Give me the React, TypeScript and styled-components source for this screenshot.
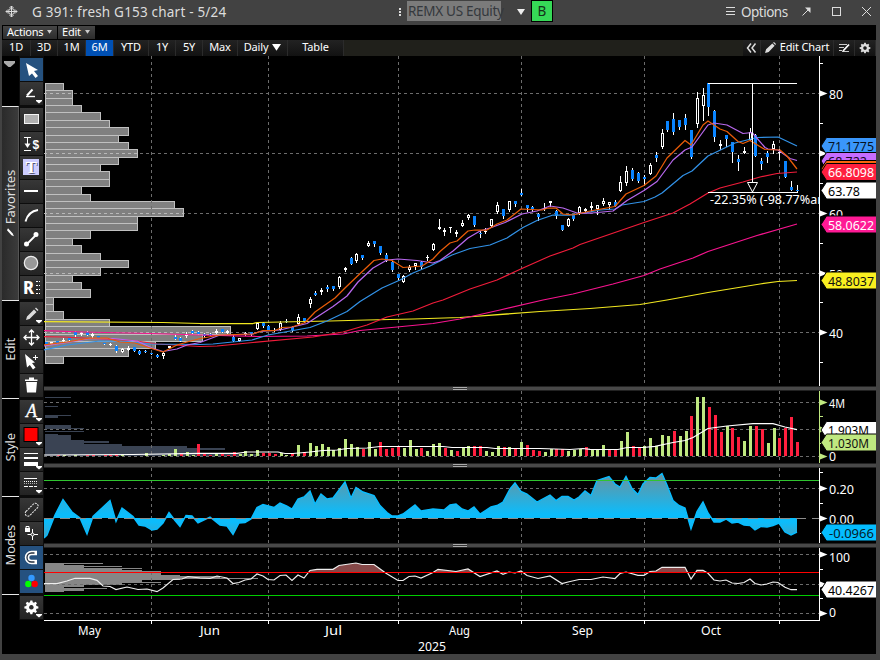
import React from 'react';
import styled, { createGlobalStyle, css } from 'styled-components';

const FONT = '"Noto Sans", "Open Sans", sans-serif';

const Global = createGlobalStyle`
  * { box-sizing: border-box; }
  body { margin: 0; background: #424242; overflow: hidden; font-family: ${FONT}; }
  svg { display: block; }
`;

const Window = styled.div`
  width: 880px;
  height: 660px;
  display: flex;
  flex-direction: column;
  background: #424242;
  color: #fff;
`;

const TitleBar = styled.header`
  height: 25px;
  flex: none;
  display: flex;
  align-items: center;
  padding: 0 5px 2px;
  color: #dcdcdc;
  font-size: 13.5px;
  line-height: 22px;
  white-space: nowrap;
`;

const Title = styled.div`
  width: 380px;
  padding-left: 14px;
  letter-spacing: 0.2px;
`;

const Security = styled.div`
  width: 94px;
  height: 20px;
  margin: -1px 16px 0 5px;
  background: #7b7b7b;
  color: #34383d;
  line-height: 21px;
  padding-left: 1px;
  letter-spacing: -0.3px;
`;

const Badge = styled.div`
  width: 22px;
  height: 22px;
  margin: -1px 172px 0 6px;
  border: 1px solid #000;
  background: #36d957;
  color: #14331a;
  text-align: center;
  line-height: 21px;
`;

const Options = styled.div`
  width: 63px;
  padding-left: 4px;
  letter-spacing: -0.5px;
`;

const WindowIcons = styled.div`
  display: flex;
  flex: 1;
`;

const Screen = styled.main`
  flex: 1;
  margin: 0 4px 6px 2px;
  background: #000;
  display: flex;
  flex-direction: column;
  min-height: 0;
`;

const MenuRow = styled.nav`
  height: 15px;
  flex: none;
  display: flex;
  gap: 1px;
  padding: 1px 1px 0;
`;

const MenuButton = styled.div<{ $w: number }>`
  width: ${p => p.$w}px;
  height: 13px;
  background: linear-gradient(#464646, #2c2c2c);
  font-size: 11px;
  line-height: 12px;
  letter-spacing: -0.2px;
  padding: 0 5px 1px 4px;
  display: flex;
  align-items: center;
  justify-content: space-between;
  white-space: nowrap;
`;

const RangeBar = styled.nav`
  height: 16px;
  flex: none;
  display: flex;
  background: #20201b;
`;

const RangeButton = styled.div<{ $w: number; $active?: boolean }>`
  width: ${p => p.$w}px;
  height: 16px;
  padding-bottom: 1px;
  border-right: 1px solid #2b2b2b;
  background: ${p => (p.$active ? '#0050b4' : 'linear-gradient(#222, #121212)')};
  font-size: 11px;
  line-height: 13px;
  letter-spacing: -0.15px;
  display: flex;
  align-items: center;
  justify-content: center;
  gap: 4px;
  white-space: nowrap;
`;

const RangeLabel = styled.span`
  height: 15px;
`;

const BarSpace = styled.div`
  flex: 1;
`;

const Body = styled.div`
  flex: 1;
  display: flex;
  min-height: 0;
`;

const Sidebar = styled.aside`
  width: 42px;
  flex: none;
`;

const ToolGroup = styled.section`
  display: flex;
`;

const GroupTab = styled.div<{ $open?: boolean; $line?: boolean }>`
  width: 17px;
  display: flex;
  align-items: center;
  justify-content: center;
  border-top: ${p => (p.$line === false ? '0' : '1px solid #e8e8e8')};
  ${p => p.$open && css`
    background: linear-gradient(90deg, #2a2a2a, #3b3b3b);
    border-right: 1px solid #555;
  `}
`;

const TabLabel = styled.div`
  writing-mode: vertical-rl;
  transform: rotate(180deg);
  font-size: 13px;
  line-height: 15px;
  color: #ddd;
  letter-spacing: -0.15px;
  display: flex;
  align-items: center;
  gap: 3px;
`;

const Tools = styled.div`
  width: 25px;
  padding: 2px 1px 1px;
  background: #0c0c0c;
  display: flex;
  flex-direction: column;
  gap: 1px;
`;

const Tool = styled.button<{ $on?: boolean }>`
  width: 23px;
  height: 23px;
  padding: 0;
  border: 0;
  background: ${p => (p.$on ? '#25517f' : 'linear-gradient(#373737, #232323)')};
`;

const ChartColumn = styled.div`
  width: 832px;
  display: flex;
  flex-direction: column;
`;

const Divider = styled.div`
  height: 5px;
  flex: none;
  background: #484848;
  border-top: 1px solid #222;
  border-bottom: 1px solid #222;
  display: flex;
  justify-content: center;
`;

const Grip = styled.div`
  width: 14px;
  height: 3px;
  background: #333;
  border-top: 1px solid #aaa;
  border-bottom: 1px solid #aaa;
`;

/* ---------- data ---------- */

// x, high, low, body top, body bottom, kind (b down, h hollow up, w flat)
type Candle = [number, number, number, number, number, 'b' | 'h' | 'w'];
const candles: Candle[] = [
  [46, 342, 344, 342, 344, 'b'], [51, 342, 344, 342, 344, 'w'], [57, 341, 343, 341, 343, 'b'],
  [63, 338, 342, 340, 341, 'w'], [69, 338, 340, 338, 340, 'b'], [75, 331, 336, 332, 335, 'b'],
  [81, 332, 335, 333, 334, 'w'], [87, 331, 335, 332, 335, 'b'], [92, 333, 337, 334, 336, 'w'],
  [98, 336, 338, 336, 338, 'b'], [104, 343, 344, 343, 344, 'b'], [110, 343, 345, 344, 345, 'w'],
  [116, 345, 352, 346, 351, 'b'], [122, 348, 352, 349, 352, 'h'], [128, 346, 350, 348, 350, 'w'],
  [134, 347, 351, 347, 351, 'b'], [139, 350, 354, 351, 354, 'b'], [145, 350, 352, 351, 352, 'b'],
  [151, 353, 354, 353, 354, 'b'], [157, 354, 357, 355, 357, 'b'], [163, 352, 358, 353, 356, 'h'],
  [169, 346, 348, 346, 348, 'h'], [175, 335, 339, 337, 339, 'b'], [180, 337, 341, 338, 341, 'b'],
  [186, 332, 337, 334, 336, 'h'], [192, 330, 333, 331, 333, 'b'], [198, 331, 334, 332, 334, 'b'],
  [204, 333, 337, 334, 336, 'b'], [210, 333, 335, 334, 335, 'b'], [216, 329, 333, 331, 333, 'w'],
  [222, 329, 332, 329, 332, 'b'], [227, 330, 333, 331, 333, 'w'], [233, 335, 341, 337, 341, 'b'],
  [239, 338, 341, 338, 341, 'h'], [245, 332, 335, 333, 334, 'w'], [251, 332, 335, 332, 334, 'b'],
  [257, 323, 329, 323, 329, 'h'], [263, 322, 327, 323, 326, 'b'], [268, 325, 330, 326, 330, 'b'],
  [274, 328, 331, 330, 331, 'w'], [280, 321, 330, 323, 330, 'h'], [286, 319, 322, 321, 322, 'b'],
  [292, 326, 331, 327, 330, 'b'], [298, 314, 325, 317, 324, 'h'], [304, 318, 322, 318, 322, 'b'],
  [310, 297, 307, 299, 304, 'h'], [315, 291, 295, 293, 295, 'b'], [321, 288, 294, 290, 292, 'w'],
  [327, 285, 291, 287, 289, 'b'], [333, 286, 290, 286, 289, 'b'], [339, 276, 288, 277, 287, 'h'],
  [345, 267, 271, 268, 270, 'w'], [351, 257, 264, 258, 264, 'b'], [356, 253, 262, 254, 261, 'h'],
  [362, 255, 259, 255, 258, 'b'], [368, 241, 246, 243, 246, 'h'], [374, 241, 246, 241, 244, 'b'],
  [380, 246, 254, 246, 253, 'b'], [386, 253, 261, 255, 261, 'b'], [392, 261, 271, 262, 270, 'b'],
  [398, 274, 280, 274, 278, 'b'], [403, 275, 282, 276, 282, 'h'], [409, 265, 271, 267, 270, 'h'],
  [415, 263, 269, 263, 266, 'h'], [421, 261, 268, 262, 267, 'b'], [427, 255, 260, 257, 258, 'w'],
  [433, 243, 250, 244, 250, 'h'], [439, 219, 229, 227, 229, 'w'], [444, 228, 235, 230, 232, 'w'],
  [450, 227, 232, 227, 228, 'w'], [456, 230, 236, 232, 234, 'w'], [462, 220, 226, 223, 226, 'h'],
  [468, 214, 219, 215, 218, 'h'], [474, 216, 226, 216, 225, 'b'], [480, 231, 237, 233, 234, 'b'],
  [485, 228, 233, 231, 232, 'w'], [491, 219, 226, 219, 226, 'h'], [497, 202, 213, 205, 212, 'h'],
  [503, 209, 218, 209, 216, 'b'], [509, 201, 211, 201, 210, 'h'], [515, 201, 206, 201, 204, 'b'],
  [521, 189, 195, 193, 195, 'b'], [527, 205, 211, 205, 208, 'b'], [532, 206, 211, 207, 209, 'b'],
  [538, 213, 220, 214, 217, 'b'], [544, 203, 210, 208, 209, 'w'], [550, 201, 206, 201, 203, 'w'],
  [556, 210, 218, 211, 216, 'b'], [562, 225, 230, 225, 230, 'b'], [568, 218, 226, 219, 226, 'h'],
  [573, 215, 220, 215, 219, 'b'], [579, 206, 214, 207, 213, 'h'], [585, 208, 212, 209, 211, 'w'],
  [591, 202, 211, 206, 208, 'w'], [597, 205, 214, 205, 209, 'h'], [603, 198, 205, 201, 204, 'h'],
  [609, 202, 209, 202, 205, 'h'], [615, 200, 206, 202, 206, 'b'], [620, 176, 191, 182, 191, 'h'],
  [626, 166, 185, 171, 183, 'h'], [632, 168, 180, 170, 179, 'b'], [638, 172, 182, 173, 181, 'b'],
  [644, 175, 185, 177, 179, 'b'], [650, 163, 174, 165, 174, 'h'], [656, 152, 161, 155, 158, 'b'],
  [662, 129, 148, 133, 147, 'h'], [667, 121, 131, 121, 130, 'b'], [673, 113, 134, 119, 132, 'b'],
  [679, 120, 129, 120, 127, 'b'], [685, 114, 129, 118, 125, 'b'], [691, 130, 158, 130, 157, 'b'],
  [697, 92, 127, 98, 124, 'h'], [703, 88, 120, 95, 106, 'h'], [708, 83, 115, 83, 107, 'b'],
  [714, 110, 141, 111, 137, 'b'], [720, 140, 149, 144, 146, 'w'], [726, 135, 146, 135, 139, 'b'],
  [732, 142, 162, 142, 152, 'b'], [738, 155, 170, 159, 162, 'b'], [744, 147, 153, 151, 153, 'w'],
  [750, 128, 140, 132, 140, 'h'], [755, 134, 156, 135, 156, 'b'], [761, 158, 169, 161, 164, 'b'],
  [767, 151, 162, 153, 157, 'b'], [773, 141, 153, 144, 149, 'h'], [779, 149, 159, 152, 153, 'w'],
  [785, 161, 177, 161, 177, 'b'], [791, 181, 190, 187, 190, 'b'], [797, 185, 192, 190, 191, 'b'],
];

const ORANGE = '44,345 67,342 90,338 107,338 120,342 135,343 150,348 163,352 177,345 187,342 200,338.5 220,335 253,334 263,330.5 275,330.5 282,327.5 292,327 305,322.5 315,312 335,298 345,288 357,276.5 374,260.5 382,259 392,260.5 403,267.5 422,266 433,259 440,251.5 450,243 457,241 468,231 475,230 487,230 497,224 507,220 521,209 542,210 548,208 556,208 563,214 573,215 590,211 615,206.5 626,194 644,185.5 656,176 667,158 685,140.5 691,145 703,125 708,121 720,129 727,131.5 738,141.5 743,143.5 750,140.5 765,149.5 780,150 787,156 797,169';
const PURPLE = '44,346 67,342.5 90,338.5 113,338.5 137,341 152,348 163,351.5 177,349 187,345 200,342.5 220,335 253,334 260,331.5 280,330 307,323.5 333,306.5 347,296 358,282 373,268 387,260 398,259 417,260.5 433,263 440,260.5 453,251 468,238 480,231 490,228 505,222.5 522,214 537,211 550,206 563,208 577,213 592,213 613,211 627,200.5 644,190.5 657,181.5 673,160 685,150 692,147 708,125 714,123 727,125 743,133.5 752,132.5 765,147.5 768,149 778,150 790,158.5 797,160.5';
const BLUE = '44,350 67,345 100,341 127,341.5 150,344 200,344.5 213,344 252,340 268,335 310,327.5 327,321 347,311.5 360,301.5 382,288 400,280 413,273 430,266 440,261 452,255 470,248.5 490,245 507,238 523,227.5 537,220.5 553,215 570,215 587,212.5 600,210 615,209 622,205 644,201.5 655,197 662,193 683,175.5 692,171 708,156 735,143 757,137.5 778,137 797,146';
const RED = '44,336.5 63,337 133,340.5 157,344 200,346.5 217,346 253,342.5 313,337 343,332 367,325 387,317 413,311 433,303 443,300 470,289 497,280 523,268 550,256 573,248 580,244.5 644,222.5 673,213 690,204 708,193 720,188 743,182 760,177 777,173.5 797,172';
const PINK = '44,330.5 83,332 150,333.5 200,335 257,336.5 307,336 343,334 360,330.5 397,327 433,323.5 460,319 500,310 543,300 573,294 613,284 644,275.5 660,269 693,258 708,251.5 757,235.5 797,224';
const YELLOW = '44,321.5 163,322.5 200,323.5 253,323.5 257,322.5 330,321 367,320 413,319 460,317.5 540,311.5 590,308.5 640,304.5 667,300 708,292.5 760,284 778,281.5 797,280.5';

const profileEnds = [64, 73, 73, 82, 101, 110, 129, 119, 129, 138, 119, 101, 110, 110, 82, 91, 175, 184, 138, 138, 91, 73, 82, 101, 129, 101, 73, 82, 91, 54, 54, 64, 110, 231, 203, 156, 129, 64];

// one entry per session; negative marks a down day, magnitude is bar height
const volumes = [
  0, 0, -1, 1, 0, 1, 0, -1, -1, 0, -1, -1, -2, 1, 0, 0, 0, 3, 0, 0, 1, 2, 7, -2, 4, 1, -12,
  -2, -1, 2, -2, -1, -4, 2, 5, 2, 6, -3, -3, -2, 3, 1, -2, 11, -4, 13, 10, 12, 9, 6, 8, 17, 12, 9, -7, 14, 7, -14, -7, -8, -9,
  8, 16, 7, -8, 5, 12, 13, -8, 6, -5, 8, 10, -10, -10, 5, 4, 10, -9, 9, -7, 14, -11, -6, -5,
  4, 7, -7, -7, 5, 6, 7, -9, 6, 6, 11, -6, -6, 15, 24, -10, -8, 10, 18, 10, 21, 20, -25, 20, 25, -40, 59, 59, -49, -41, -24, 30, -28, -19, 15, 30, -30, -27, 13, 28, -18, -28, -39, -14,
];

const VOL_AVG = '44,455 133,454.5 200,453.3 237,453.3 247,452 278,452 285,453.5 293,453.5 310,452 323,450.5 337,450 347,448.5 367,448 380,446.5 443,446.5 452,447.5 487,447.5 495,448.5 540,448.5 570,449.5 583,448.5 590,449.3 618,449.5 627,447.5 643,447.5 655,446.3 673,442.5 685,440.5 693,437.5 708,428.5 727,426 753,423.7 773,423.7 785,427 797,429.7';

// y, height, right edge
const volProfile = [
  [397, 1, 71], [406, 1, 58], [415, 1, 71], [416, 2, 58], [425, 3, 71], [428, 1, 84], [431, 1, 84],
  [434, 1, 58], [435, 5, 71], [440, 1, 84], [441, 2, 109], [443, 1, 84], [444, 2, 122], [446, 2, 187],
  [448, 2, 225], [450, 4, 197], [454, 2, 260],
];

const FLOW = '44,538 47,535 55,515 63,499.5 72,512 80,518 87,534 93,516.5 110,500.5 116,521.5 122,508 133,516.5 139,525 145,526 152,530 157,529 163,523 169,512.5 175,520.5 180,526.5 186,515.5 192,516 198,523 210,517 220,525 227,526 233,534.5 239,523 245,522.5 251,519 257,507.5 263,504.5 274,507.5 280,503 287,506 292,509 298,499 304,497 310,491 315,504 321,494 327,499 333,498 345,482 351,498 356,487.5 363,492 374,495.5 380,505.5 387,512.5 392,516 398,516 403,514 415,505 421,511 433,509 444,510 450,505 456,504 462,509 468,511 474,507 480,514 491,507 497,505.5 503,502 510,489 515,483 521,491.5 527,494 537,502 550,495 556,500.5 562,496.5 568,496.5 574,500 579,497 585,491 591,495.5 597,480.5 609,476.5 615,484 620,487 626,476.5 632,488.5 638,494.5 643,484 650,477.5 656,478 662,473.5 667,485 673,500.5 679,505.5 685,508 691,529 697,511.5 703,502 708,513 714,522 720,522 726,519 732,523 738,522 744,525 750,525.5 755,530 761,526.5 767,527 773,525.5 779,523 785,532 791,535 797,532';

const RSI = '44,583.7 57,583.7 67,581 75,578.3 90,578.3 97,580.3 103,586 110,586.5 116,589.5 127,587 138,589.5 147,589 157,591.7 163,588 173,579.5 182,579 188,576.5 200,578 210,578.5 217,576 227,578 233,583.5 239,582.5 245,580 251,579 257,574 263,576 268,579.5 274,580 280,575.5 286,575 292,580.5 298,575 304,578 310,570.5 317,569.3 333,569.3 339,565.5 356,563 362,564.5 374,564.5 386,573.3 398,580.5 403,580.5 409,576.5 415,576 421,578 433,572.5 438,569.3 456,571.5 468,569 480,576.5 497,571 503,574.3 509,572 515,573 521,571 527,575.5 538,578.5 550,576 562,583.5 568,582 579,579.5 591,579.5 603,577 615,578.5 620,573.5 626,572 638,575.3 644,575.3 650,571.5 656,571 662,567.3 685,567.3 691,579 697,570.3 703,570.3 708,573.3 714,580 720,581 726,580 732,583 738,583.5 744,582.5 750,579 755,583.5 761,585 767,584 773,582 778,582.5 785,587.3 791,589.7 797,589.7';

const rsiProfile = [
  [563, 1, 103], [564, 1, 64], [565, 1, 84], [566, 1, 122], [567, 1, 84], [568, 1, 142], [569, 1, 122], [570, 1, 142],
  [571, 1, 161], [572, 3, 161], [575, 1, 180], [576, 2, 220], [578, 1, 258], [579, 1, 180], [580, 2, 142], [582, 1, 161],
  [583, 2, 122], [585, 2, 84], [587, 1, 64], [588, 1, 107], [589, 2, 84], [591, 1, 64],
];

const months = [151.5, 268.5, 398.5, 521.5, 644.5, 779.5];

/* ---------- chart parts ---------- */

const Txt = ({ x, y, w, s = 13, fill = '#fff', children }: { x: number; y: number; w: number; s?: number; fill?: string; children: string }) => (
  <text x={x} y={y} textLength={w} lengthAdjust="spacingAndGlyphs" fontSize={s} fontFamily={FONT} fill={fill}>{children}</text>
);

const Grid = ({ top, bottom, rows }: { top: number; bottom: number; rows: number[] }) => (
  <g stroke="#6c6c6c" strokeDasharray="3 3" shapeRendering="crispEdges">
    {rows.map(y => <line key={y} x1={44} x2={819} y1={y} y2={y} />)}
    {months.map(x => <line key={x} x1={x} x2={x} y1={top} y2={bottom} />)}
  </g>
);

const Axis = ({ top, bottom, major, minor, color = '#fff' }: { top: number; bottom: number; major: number[]; minor: number[]; color?: string }) => (
  <g>
    <rect x={819} y={top} width={1} height={bottom - top} fill={color} />
    {major.map(y => <path key={y} d={`M820 ${y - 3}L827.5 ${y}L820 ${y + 3}z`} fill={color} />)}
    {minor.map(y => <rect key={y} x={820} y={y - 0.5} width={3} height={1} fill={color} />)}
  </g>
);

const Tag = ({ y, fill, color, text, h = 17, x = 828, w = 46 }: { y: number; fill: string; color: string; text?: string; h?: number; x?: number; w?: number }) => (
  <g>
    <path d={`M821 ${y + h / 2}L826.5 ${y}H877V${y + h}H826.5z`} fill={fill} stroke="#000" strokeWidth={1} />
    {text && <Txt x={x} y={y + 13.5} w={w} fill={color}>{text}</Txt>}
  </g>
);

const pane = (top: number, height: number) => ({ width: 832, height, viewBox: `44 ${top} 832 ${height}` });

const PricePane = () => (
  <svg {...pane(56, 330)}>
    {profileEnds.map((e, i) => {
      const y = Math.round(83 + i * 7.37);
      const h = Math.round(83 + (i + 1) * 7.37) - y;
      return <rect key={i} x={45.5} y={y + 0.5} width={e - 46} height={h} fill="#808080" stroke="#c0c0c0" shapeRendering="crispEdges" />;
    })}
    <Grid top={56} bottom={386} rows={[93.5, 153.5, 213.5, 273.5, 332.5]} />
    <g stroke="#b8b8b8" strokeDasharray="3 3" shapeRendering="crispEdges">
      <line x1={44} x2={73} y1={93.5} y2={93.5} />
      <line x1={44} x2={138} y1={153.5} y2={153.5} />
      <line x1={44} x2={184} y1={213.5} y2={213.5} />
      <line x1={44} x2={101} y1={273.5} y2={273.5} />
      <line x1={44} x2={231} y1={332.5} y2={332.5} />
    </g>
    <g shapeRendering="crispEdges">
      {candles.map(([x, hi, lo, t, b, k]) => (
        <g key={x}>
          <rect x={x} y={hi} width={1} height={lo - hi + 1} fill="#fff" />
          {k === 'h'
            ? <rect x={x - 0.5} y={t + 0.5} width={2} height={Math.max(1, b - t - 1)} fill="#000" stroke="#fff" />
            : <rect x={x - 1} y={t} width={3} height={Math.max(1, b - t)} fill={k === 'b' ? '#0a84ff' : '#fff'} />}
        </g>
      ))}
    </g>
    <g fill="none" strokeWidth={1.25} strokeLinejoin="round">
      <polyline points={YELLOW} stroke="#f2e820" />
      <polyline points={PINK} stroke="#f8148f" />
      <polyline points={RED} stroke="#f01c3a" />
      <polyline points={BLUE} stroke="#3292e8" />
      <polyline points={PURPLE} stroke="#b868ee" />
      <polyline points={ORANGE} stroke="#ea5c08" />
    </g>
    <g stroke="#fff" fill="none" shapeRendering="crispEdges">
      <path d="M708 83.5H797M708 192.5H797M752.5 83V192" />
    </g>
    <path d="M747.5 182.5H757.5L752.5 192z" fill="#000" stroke="#fff" />
    <svg x={44} y={56} width={775} height={330} viewBox="44 56 775 330">
      <Txt x={710} y={204} w={115} s={12.5}>-22.35% (-98.77%an</Txt>
    </svg>
    <Axis top={56} bottom={386} major={[93.5, 153.5, 213.5, 273.5, 332.5]} minor={[63.5, 123.5, 183.5, 243.5, 302.5, 362.5]} />
    <Txt x={829} y={98.5} w={14}>80</Txt>
    <Txt x={829} y={218.5} w={14}>60</Txt>
    <Txt x={829} y={278.5} w={14}>50</Txt>
    <Txt x={829} y={337.5} w={14}>40</Txt>
    <Tag y={137.5} fill="#3a96fa" color="#06121f" text="71.1775" />
    <Tag y={152.5} fill="#c66cff" color="#180622" text="68.722" w={39} />
    <Tag y={160.5} fill="#f8650c" color="#200" />
    <Tag y={163.5} fill="#ff1f3f" color="#fff" text="66.8098" />
    <Tag y={182} fill="#fff" color="#000" text="63.78" w={32} />
    <Tag y={216} fill="#ff1a95" color="#fff" text="58.0622" />
    <Tag y={272} fill="#f9ef20" color="#111" text="48.8037" />
  </svg>
);

const VolumePane = () => (
  <svg {...pane(391, 72)}>
    {volProfile.map(([y, h, e]) => <rect key={y} x={45} y={y} width={e - 45} height={h} fill="#3a4353" />)}
    <Grid top={391} bottom={463} rows={[402.5, 429.5, 456.5]} />
    <g shapeRendering="crispEdges">
      {volumes.map((v, i) => {
        const h = Math.abs(v);
        const x = Math.round(45.9 + i * 5.868) - 1;
        return h ? <rect key={i} x={x} y={456 - h} width={3} height={h} fill={v < 0 ? '#ff1f3f' : '#bfe880'} /> : null;
      })}
    </g>
    <polyline points={VOL_AVG} fill="none" stroke="#fff" strokeWidth={1.2} />
    <Axis top={391} bottom={463} major={[402.5, 429.5, 456.5]} minor={[416.5, 443.5]} color="#bfe880" />
    <Txt x={829} y={408} w={16}>4M</Txt>
    <Txt x={829} y={460.5} w={7}>0</Txt>
    <Tag y={421.5} fill="#fff" color="#000" text="1.903M" w={41} />
    <Tag y={434} fill="#bfe880" color="#111" text="1.030M" w={41} />
  </svg>
);

const FlowPane = () => (
  <svg {...pane(468, 75)}>
    <defs>
      <linearGradient id="flow" gradientUnits="userSpaceOnUse" x1="0" x2="0" y1="474" y2="543">
        <stop offset="0" stopColor="#6b929c" />
        <stop offset="0.58" stopColor="#0cbcfb" />
        <stop offset="0.7" stopColor="#0cbcfb" />
        <stop offset="1" stopColor="#5798ac" />
      </linearGradient>
    </defs>
    <Grid top={468} bottom={543} rows={[488.5]} />
    <polygon points={`44,518 ${FLOW} 797,518`} fill="url(#flow)" />
    <polyline points={FLOW} fill="none" stroke="#08bcff" strokeWidth={1.4} />
    <line x1={44} x2={819} y1={518.5} y2={518.5} stroke="#8c8c8c" strokeDasharray="10 6" shapeRendering="crispEdges" />
    <rect x={44} y={480} width={775} height={1} fill="#2fc42f" />
    <Axis top={468} bottom={543} major={[488.5, 518.5]} minor={[472.5, 503.5, 533.5]} />
    <Txt x={829} y={494} w={25}>0.20</Txt>
    <Txt x={829} y={523.5} w={25}>0.00</Txt>
    <Tag y={524} fill="#04bdff" color="#06202c" text="-0.0966" w={45} x={829} />
  </svg>
);

const RsiPane = () => (
  <svg {...pane(548, 74)}>
    <defs>
      <clipPath id="overbought"><rect x={44} y={548} width={775} height={24} /></clipPath>
    </defs>
    {rsiProfile.map(([y, h, e]) => <rect key={y} x={45} y={y} width={e - 45} height={h} fill="#868686" />)}
    <Grid top={548} bottom={620} rows={[554.5, 584.5, 613.5]} />
    <polygon points={`44,600 ${RSI} 797,600`} fill="#854848" clipPath="url(#overbought)" />
    <polyline points={RSI} fill="none" stroke="#eee" strokeWidth={1.2} />
    <rect x={44} y={572} width={775} height={1} fill="#ff0000" />
    <rect x={44} y={595} width={775} height={1} fill="#00cc00" />
    <rect x={44} y={620} width={776} height={1} fill="#fff" />
    {months.map(x => <rect key={x} x={x - 0.5} y={620} width={1} height={4} fill="#fff" />)}
    <Axis top={548} bottom={621} major={[554.5, 584.5, 613.5]} minor={[569.5, 598.5]} />
    <Txt x={829} y={562} w={21}>100</Txt>
    <Txt x={829} y={617} w={7}>0</Txt>
    <Tag y={581} fill="#fff" color="#000" text="40.4267" />
  </svg>
);

const DateAxis = () => (
  <svg {...pane(622, 32)}>
    {months.map(x => <rect key={x} x={x - 0.5} y={622} width={1} height={2} fill="#fff" />)}
    <Txt x={78} y={635} w={23}>May</Txt>
    <Txt x={200} y={635} w={20}>Jun</Txt>
    <Txt x={325} y={635} w={17}>Jul</Txt>
    <Txt x={449} y={635} w={21}>Aug</Txt>
    <Txt x={572} y={635} w={21}>Sep</Txt>
    <Txt x={701} y={635} w={20}>Oct</Txt>
    <Txt x={418} y={651} w={28}>2025</Txt>
  </svg>
);

/* ---------- icons ---------- */

const Caret = ({ size = 5, color = '#ccc' }: { size?: number; color?: string }) => (
  <svg width={size} height={size * 0.75} viewBox="0 0 8 6"><path d="M0 0H8L4 6z" fill={color} /></svg>
);

const gearPath = 'M6.9 1h2.2l.4 2 1.3.6 1.8-1.1 1.5 1.6-1.1 1.7.6 1.3 2 .4v2.2l-2 .4-.6 1.3 1.1 1.7-1.6 1.6-1.7-1.2-1.3.6-.4 2H6.9l-.4-2-1.3-.6-1.7 1.2-1.6-1.6 1.1-1.7-.6-1.3-2-.4V7.5l2-.4.6-1.3L1.9 4.1l1.6-1.6 1.7 1.1 1.3-.6zM8 6a2.5 2.5 0 1 0 .01 0z';

const Gear = ({ size, color = '#fff' }: { size: number; color?: string }) => (
  <svg width={size} height={size} viewBox="0 0 16 17"><path d={gearPath} fill={color} fillRule="evenodd" /></svg>
);

const Pencil = ({ size }: { size: number }) => (
  <svg width={size} height={size} viewBox="0 0 12 12"><path d="M0 12L1.2 8L8 1.5L10.5 4L4 10.8zM8.8 .8L9.8 0L12 2.2L11.2 3.2z" fill="#ddd" /></svg>
);

type IconName = 'cursor' | 'line' | 'rect' | 'price' | 'text' | 'hline' | 'arc' | 'segment' | 'circle' | 'regression' | 'pencil' | 'move' | 'cursorPlus' | 'trash' | 'font' | 'color' | 'weight' | 'dash' | 'erase' | 'lock' | 'magnet' | 'rgb' | 'gear';

const drawings: Record<IconName, React.ReactNode> = {
  cursor: <path d="M6 5L18 12L14 13L18 18L15.5 20L12 15.5L9 18z" fill="#fff" />,
  line: <g fill="none" stroke="#fff"><path d="M7 13.5L12.5 7.5" strokeWidth="2" /><path d="M6 14.5H15" strokeWidth="1.4" /></g>,
  rect: <rect x="4.500" y="6.500" width="14" height="9" fill="#b0b0b0" stroke="#f4f4f4" />,
  price: (
    <g>
      <path d="M4 5.500H11M4 18.500H11M7.500 6V13" stroke="#fff" fill="none" />
      <path d="M4.500 11.500H10.500L7.500 16z" fill="#fff" />
      <text x="12.500" y="16.500" fontSize="12" fontWeight="700" fontFamily="Liberation Sans" fill="#fff">$</text>
    </g>
  ),
  text: (
    <g>
      <rect x="3" y="3" width="16" height="16" fill="#ccccff" />
      <text x="6.500" y="17.500" fontSize="17" fontWeight="700" fontFamily="Liberation Serif" fill="#555577">T</text>
      <text x="5.500" y="16.500" fontSize="17" fontWeight="700" fontFamily="Liberation Serif" fill="#fff">T</text>
    </g>
  ),
  hline: <rect x="4" y="10" width="14" height="2" fill="#fff" />,
  arc: <path d="M5.500 17.500C7 12 11 7 18 6" fill="none" stroke="#fff" strokeWidth="2" />,
  segment: (
    <g fill="#fff" stroke="#fff" strokeWidth="1.800">
      <path d="M7 16L16 7" />
      <circle cx="6.500" cy="16" r="1.600" /><circle cx="16" cy="6.500" r="1.600" />
    </g>
  ),
  circle: <circle cx="11" cy="11" r="6.700" fill="#999" stroke="#eee" strokeWidth="1.200" />,
  regression: (
    <g>
      <text x="3" y="17.500" fontSize="17" fontWeight="800" fontFamily="Noto Sans" fill="#fff" textLength="11" lengthAdjust="spacingAndGlyphs">R</text>
      <path d="M16 5.500H20M16 9.500H20M16 13.500H20M16 17.500H20" stroke="#fff" strokeDasharray="2 1" />
    </g>
  ),
  pencil: <path d="M6 18L7 14.500L14 7.500L16.500 10L9.500 17zM15 6.500L16 5.500L18.500 8L17.500 9z" fill="#ddd" />,
  move: <path d="M11.500 4V19M4 11.500H19M9 6.500L11.500 4L14 6.500M9 16.500L11.500 19L14 16.500M6.500 9L4 11.500L6.500 14M16.500 9L19 11.500L16.500 14" fill="none" stroke="#fff" strokeWidth="1.300" />,
  cursorPlus: <g><path d="M5 4L15 12.500L12 13L15.500 17.500L13 19.500L9.800 15L7 17.500z" fill="#fff" /><path d="M13 7.500H18M15.500 5V10" stroke="#fff" /></g>,
  trash: <g fill="#fff"><path d="M6 8H17L16 18.500H7z" /><path d="M5 5.500H17.500V7H5zM9 3.500H14V5.500H9z" /></g>,
  font: <text x="6" y="16.500" fontSize="18" fontStyle="italic" fontFamily="Liberation Serif" fill="#fff" stroke="#fff" strokeWidth=".3">A</text>,
  color: <rect x="4" y="3.500" width="14" height="14" fill="#ff0000" stroke="#000" />,
  weight: <g fill="#fff"><rect x="4" y="5" width="14" height="1" /><rect x="4" y="9" width="14" height="2" /><rect x="4" y="14" width="14" height="4" /></g>,
  dash: <g stroke="#fff"><path d="M4 6.500H17" /><path d="M4 9.500H17" strokeDasharray="1 1" /><path d="M4 11.500H17" strokeDasharray="1 1" strokeOpacity=".6" /><path d="M4 14.500H17" strokeDasharray="4 1" /></g>,
  erase: <rect x="3.500" y="9" width="16" height="5.500" rx="2.750" transform="rotate(-45 11.500 11.500)" fill="none" stroke="#eee" strokeDasharray="2 1" />,
  lock: <g><rect x="5" y="6" width="5" height="4" fill="#fff" /><path d="M6 6.500V4.500H9V6.500" stroke="#fff" fill="none" /><path d="M12.500 7V18M7.500 12.500H18" stroke="#fff" /><circle cx="12.500" cy="12.500" r="1.500" fill="#333" stroke="#fff" /></g>,
  magnet: <g fill="none"><path d="M17 7H11.500A4.500 4.500 0 0 0 11.500 16H17" stroke="#fff" strokeWidth="4.500" /><path d="M14.500 7H11.500A4.500 4.500 0 0 0 11.500 16H14.500" stroke="#243040" strokeWidth="1.300" /></g>,
  rgb: <g><circle cx="11.500" cy="8" r="3.200" fill="#3399ff" /><circle cx="8.300" cy="14" r="3.200" fill="#00ff00" /><circle cx="14.700" cy="14" r="3.200" fill="#ff0000" /></g>,
  gear: <path d={gearPath} transform="translate(4 3.500) scale(.92)" fill="#fff" fillRule="evenodd" />,
};

const ToolButton = ({ icon, on, menu }: { icon: IconName; on?: boolean; menu?: boolean }) => (
  <Tool $on={on} aria-label={icon}>
    <svg width={23} height={23} viewBox="0 0 23 23">
      {drawings[icon]}
      {menu && <path d="M16 18H22V19L19 21.500L16 19z" fill="#fff" />}
    </svg>
  </Tool>
);

export default function App() {
  return (
    <>
      <Global />
      <Window>
        <TitleBar>
          <svg width={13} height={13} viewBox="0 0 13 13" fill="none" stroke="#ddd">
            <circle cx="6.500" cy="6.500" r="3" /><path d="M6.500 1V12M1 6.500H12M4.500 3L6.500 1L8.500 3M4.500 10L6.500 12L8.500 10M3 4.500L1 6.500L3 8.500M10 4.500L12 6.500L10 8.500" />
          </svg>
          <Title>G 391: fresh G153 chart - 5/24</Title>
          <svg width={4} height={10} viewBox="0 0 4 10" fill="#ddd"><path d="M1 1H3V3H1zM1 4H3V6H1zM1 7H3V9H1z" /></svg>
          <Security>REMX US Equity</Security>
          <Caret size={8} color="#eee" />
          <Badge>B</Badge>
          <svg width={12} height={11} viewBox="0 0 12 11" stroke="#ddd"><path d="M1 1.500H10M1 5.500H10M1 8.500H10" /></svg>
          <Options>Options</Options>
          <WindowIcons>
            <svg width={74} height={13} viewBox="801 5 74 13" fill="none" stroke="#ddd">
              <path d="M803.500 15.500L810 9" /><path d="M806 7.500H811.500V13z" fill="#ddd" stroke="none" />
              <rect x="833.500" y="7.500" width="8" height="8" /><path d="M863 7L872 16M872 7L863 16" />
            </svg>
          </WindowIcons>
        </TitleBar>
        <Screen>
          <MenuRow>
            <MenuButton $w={54}>Actions<Caret /></MenuButton>
            <MenuButton $w={37}>Edit<Caret /></MenuButton>
          </MenuRow>
          <RangeBar>
            <RangeButton $w={29}><RangeLabel>1D</RangeLabel></RangeButton>
            <RangeButton $w={27}><RangeLabel>3D</RangeLabel></RangeButton>
            <RangeButton $w={28}><RangeLabel>1M</RangeLabel></RangeButton>
            <RangeButton $w={28} $active><RangeLabel>6M</RangeLabel></RangeButton>
            <RangeButton $w={35}><RangeLabel>YTD</RangeLabel></RangeButton>
            <RangeButton $w={27}><RangeLabel>1Y</RangeLabel></RangeButton>
            <RangeButton $w={27}><RangeLabel>5Y</RangeLabel></RangeButton>
            <RangeButton $w={35}><RangeLabel>Max</RangeLabel></RangeButton>
            <RangeButton $w={50}><RangeLabel>Daily</RangeLabel><Caret size={9} color="#fff" /></RangeButton>
            <RangeButton $w={56}><RangeLabel>Table</RangeLabel></RangeButton>
            <BarSpace />
            <RangeButton $w={18}>
              <svg width={11} height={10} viewBox="0 0 11 10" fill="none" stroke="#ddd" strokeWidth="1.500"><path d="M5 .5L1.500 5L5 9.500M9.500 .5L6 5L9.500 9.500" /></svg>
            </RangeButton>
            <RangeButton $w={73}><Pencil size={11} /><RangeLabel>Edit Chart</RangeLabel></RangeButton>
            <RangeButton $w={21}>
              <svg width={11} height={10} viewBox="0 0 11 10" fill="none" stroke="#ccc"><path d="M0 1.500H8M0 4.500H5M0 7.500H3M3 8.500H10" /><path d="M4 8L10 1.500" stroke="#fff" strokeWidth="1.800" /></svg>
            </RangeButton>
            <RangeButton $w={21}><Gear size={12} color="#ddd" /></RangeButton>
          </RangeBar>
          <Body>
            <Sidebar>
              <ToolGroup>
                <GroupTab $line={false}>
                  <svg width={17} height={50} viewBox="0 0 17 50"><path d="M2 5H13V7L8.500 11H6.500L2 7z" fill="#aaa" /></svg>
                </GroupTab>
                <Tools><ToolButton icon="cursor" on /><ToolButton icon="line" menu /></Tools>
              </ToolGroup>
              <ToolGroup>
                <GroupTab $open>
                  <TabLabel>
                    <svg width={9} height={10} viewBox="0 0 9 10"><path d="M1 1L3.500 2L8 7L7 9L2.500 4z" fill="#fff" /></svg>
                    Favorites
                  </TabLabel>
                </GroupTab>
                <Tools>
                  <ToolButton icon="rect" /><ToolButton icon="price" /><ToolButton icon="text" /><ToolButton icon="hline" />
                  <ToolButton icon="arc" /><ToolButton icon="segment" /><ToolButton icon="circle" /><ToolButton icon="regression" />
                </Tools>
              </ToolGroup>
              <ToolGroup>
                <GroupTab><TabLabel>Edit</TabLabel></GroupTab>
                <Tools><ToolButton icon="pencil" menu /><ToolButton icon="move" /><ToolButton icon="cursorPlus" /><ToolButton icon="trash" /></Tools>
              </ToolGroup>
              <ToolGroup>
                <GroupTab><TabLabel>Style</TabLabel></GroupTab>
                <Tools><ToolButton icon="font" menu /><ToolButton icon="color" menu /><ToolButton icon="weight" menu /><ToolButton icon="dash" menu /></Tools>
              </ToolGroup>
              <ToolGroup>
                <GroupTab><TabLabel>Modes</TabLabel></GroupTab>
                <Tools><ToolButton icon="erase" /><ToolButton icon="lock" /><ToolButton icon="magnet" on /><ToolButton icon="rgb" on /></Tools>
              </ToolGroup>
              <ToolGroup>
                <GroupTab />
                <Tools><ToolButton icon="gear" menu /></Tools>
              </ToolGroup>
            </Sidebar>
            <ChartColumn>
              <PricePane />
              <Divider><Grip /></Divider>
              <VolumePane />
              <Divider><Grip /></Divider>
              <FlowPane />
              <Divider><Grip /></Divider>
              <RsiPane />
              <DateAxis />
            </ChartColumn>
          </Body>
        </Screen>
      </Window>
    </>
  );
}
